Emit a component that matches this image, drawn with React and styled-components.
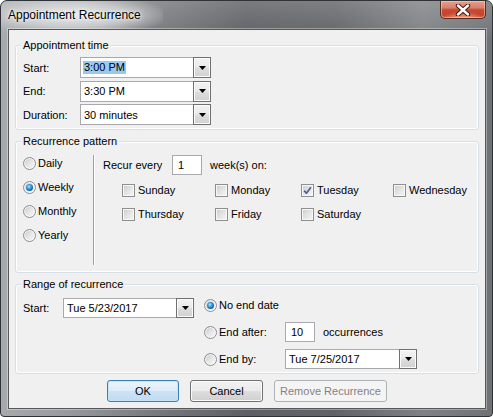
import React from "react";
import styled, { createGlobalStyle, css } from "styled-components";

const GlobalStyle = createGlobalStyle`
  html, body { margin: 0; padding: 0; background: #ffffff; }
  body { font-family: "Liberation Sans", Arial, sans-serif; font-size: 11px; color: #000; }
  * { box-sizing: border-box; }
`;

const Window = styled.div`
  width: 493px;
  height: 417px;
  display: flex;
  flex-direction: column;
  border: 1px solid #2f3236;
  border-radius: 7px 7px 4px 4px;
  overflow: hidden;
  background:
    linear-gradient(180deg, rgba(255,255,255,0.18) 0px, rgba(255,255,255,0) 40px),
    linear-gradient(90deg, #a7aaad 0%, #979a9d 14%, #76797c 32%, #5c5f63 50%, #616467 68%, #7f8285 86%, #6f7275 100%);
`;

const TitleBar = styled.div`
  height: 28px;
  flex: none;
  display: flex;
  align-items: flex-start;
`;

const Caption = styled.span`
  padding: 6px 22px 6px 7px;
  font-size: 12px;
  line-height: 16px;
  color: #000;
  background: radial-gradient(ellipse 60% 75% at 45% 50%, rgba(236,236,236,0.95) 0%, rgba(220,221,222,0.7) 55%, rgba(200,200,200,0) 100%);
  text-shadow: 0 0 6px #fff, 0 0 3px #fff;
`;

const CloseButton = styled.div`
  margin-left: auto;
  margin-right: 6px;
  width: 46px;
  height: 18px;
  border: 1px solid #5a2a22;
  border-top: none;
  border-radius: 0 0 5px 5px;
  background:
    radial-gradient(ellipse 45% 40% at 50% 100%, rgba(255,190,150,0.75), rgba(255,160,120,0) 100%),
    linear-gradient(180deg, #e6a08c 0%, #d8806a 40%, #c64a31 52%, #c3442b 80%, #cf5a3c 100%);
  box-shadow: inset 0 0 0 1px rgba(255,210,195,0.55);
  display: flex;
  align-items: center;
  justify-content: center;
`;

const Client = styled.div`
  flex: 1;
  margin: 0 6px 7px 7px;
  border: 1px solid #54575b;
  box-shadow: 0 0 0 1px rgba(255,255,255,0.35);
  background: #f0f0f0;
  display: flex;
  flex-direction: column;
  padding: 8px 6px 0 6px;
`;

const Group = styled.fieldset`
  margin: 0;
  min-width: 0;
  border: 1px solid #d5dfe5;
  border-radius: 3px;
  box-shadow: inset 0 0 0 1px #ffffff;
  padding: ${(p) => p.$pt}px 7px ${(p) => p.$pb}px 7px;
  & + & { margin-top: 4px; }
`;

const Legend = styled.legend`
  padding: 0 2px;
  margin-left: -2px;
  font-size: 11px;
  line-height: 14px;
  background: #f0f0f0;
`;

const TimeGrid = styled.div`
  display: grid;
  grid-template-columns: 57px 131px;
  grid-template-rows: 21px 21px 21px;
  row-gap: 2.5px;
`;

const Label = styled.span`
  display: flex;
  align-items: center;
  white-space: nowrap;
  ${(p) => p.$w && css`width: ${p.$w}px; flex: none;`}
`;

const ComboWrap = styled.div`
  display: flex;
  width: ${(p) => p.$w}px;
  height: ${(p) => p.$h}px;
  flex: none;
`;

const Field = styled.div`
  flex: 1;
  min-width: 0;
  border: 1px solid #a7a9ad;
  border-right: none;
  background: #ffffff;
  display: flex;
  align-items: center;
  padding-left: ${(p) => (p.$pl != null ? p.$pl : 3)}px;
  white-space: nowrap;
  overflow: hidden;
`;

const DropButton = styled.div`
  width: 18px;
  flex: none;
  border: 1px solid #707070;
  background: linear-gradient(180deg, #f3f3f3 0%, #ebebeb 45%, #dcdcdc 55%, #d2d2d2 100%);
  box-shadow: inset 0 0 0 1px #fbfbfb;
  display: flex;
  align-items: center;
  justify-content: center;
`;

const Selected = styled.span`
  background: #99c9ef;
  padding: 0 1px;
  margin-left: -1px;
  line-height: 13px;
`;

const TextBox = styled.div`
  width: ${(p) => p.$w}px;
  height: ${(p) => p.$h}px;
  flex: none;
  border: 1px solid #a7a9ad;
  background: #ffffff;
  display: flex;
  align-items: center;
  padding-left: 5px;
`;

const PatternBody = styled.div`
  display: flex;
  align-items: flex-start;
`;

const FrequencyList = styled.div`
  width: 70px;
  flex: none;
  display: grid;
  grid-auto-rows: 24px;
`;

const Choice = styled.label`
  display: flex;
  align-items: center;
  gap: 2px;
  white-space: nowrap;
`;

const RadioCircle = styled.span`
  position: relative;
  width: 13px;
  height: 13px;
  flex: none;
  border-radius: 50%;
  border: 1px solid #8d8f91;
  background: linear-gradient(135deg, #c3c4c6 0%, #e2e3e4 45%, #fbfbfb 100%);
  box-shadow: inset 0 0 0 1px rgba(255,255,255,0.7);
  ${(p) =>
    p.$checked &&
    css`
      &::after {
        content: "";
        position: absolute;
        left: 2px;
        top: 2px;
        width: 7px;
        height: 7px;
        border-radius: 50%;
        background: radial-gradient(circle at 42% 38%, #bfeaff 0%, #43a7e6 30%, #1569aa 65%, #0c3f6e 100%);
      }
    `}
`;

const WeeklyPanel = styled.div`
  margin-top: 4px;
  height: 110px;
  flex: 1;
  border-left: 1px solid #a0a0a0;
  box-shadow: inset 1px 0 0 #ffffff;
  padding-left: 9px;
`;

const RecurRow = styled.div`
  display: flex;
  align-items: center;
  height: 20px;
`;

const Suffix = styled.span`
  margin-left: 8px;
  white-space: nowrap;
`;

const DayGrid = styled.div`
  margin: 3px 0 0 19px;
  display: grid;
  grid-template-columns: 93px 86px 92px auto;
  grid-auto-rows: 24px;
`;

const DayChoice = styled.label`
  display: flex;
  align-items: center;
  gap: 3px;
  white-space: nowrap;
`;

const CheckBox = styled.span`
  width: 13px;
  height: 13px;
  flex: none;
  border: 1px solid #8e8f8f;
  background: linear-gradient(135deg, #c9cacb 0%, #e4e4e5 50%, #f7f7f7 100%);
  box-shadow: inset 0 0 0 1px #f7f7f7;
  display: flex;
  align-items: center;
  justify-content: center;
`;

const RangeBody = styled.div`
  display: flex;
  align-items: flex-start;
`;

const StartCol = styled.div`
  display: flex;
  align-items: center;
  margin-top: 3px;
`;

const EndGrid = styled.div`
  margin-left: 10px;
  display: grid;
  grid-template-columns: 81px auto;
  grid-auto-rows: 20px;
  row-gap: 7px;
`;

const Inline = styled.div`
  display: flex;
  align-items: center;
`;

const ButtonRow = styled.div`
  margin-top: 6px;
  display: flex;
  justify-content: center;
  gap: 11px;
`;

const Button = styled.button`
  width: ${(p) => p.$w}px;
  height: 22px;
  padding: 0;
  font-family: "Liberation Sans", Arial, sans-serif;
  font-size: 11px;
  color: #000;
  border: 1px solid #707070;
  border-radius: 3px;
  background: linear-gradient(180deg, #f2f2f2 0%, #ebebeb 48%, #dddddd 52%, #cfcfcf 100%);
  box-shadow: inset 0 0 0 1px #fcfcfc;
  ${(p) =>
    p.$default &&
    css`
      border-color: #3c7fb1;
      background: linear-gradient(180deg, #eaf4fc 0%, #dfedf9 48%, #cde3f5 52%, #c0dbf1 100%);
      box-shadow: inset 0 0 0 1px #c4e5f8;
    `}
  &:disabled {
    border-color: #adb2b5;
    background: #f4f4f4;
    box-shadow: none;
    color: #838383;
  }
`;

const Arrow = () => (
  <svg width="7" height="4" viewBox="0 0 7 4">
    <path d="M0 0 H7 L3.5 4 Z" fill="#000" />
  </svg>
);

const ComboBox = ({ w, h, children }) => (
  <ComboWrap $w={w} $h={h}>
    <Field>{children}</Field>
    <DropButton>
      <Arrow />
    </DropButton>
  </ComboWrap>
);

const Radio = ({ checked, children }) => (
  <Choice>
    <RadioCircle $checked={checked} />
    {children}
  </Choice>
);

const Day = ({ checked, children }) => (
  <DayChoice>
    <CheckBox>
      {checked && (
        <svg width="9" height="9" viewBox="0 0 9 9">
          <path d="M1.2 4.6 L3.4 7.2 L7.9 1.2" fill="none" stroke="#4a5d98" strokeWidth="1.7" strokeLinejoin="round" />
        </svg>
      )}
    </CheckBox>
    {children}
  </DayChoice>
);

const days = [
  ["Sunday", false],
  ["Monday", false],
  ["Tuesday", true],
  ["Wednesday", false],
  ["Thursday", false],
  ["Friday", false],
  ["Saturday", false],
];

export default function App() {
  return (
    <>
      <GlobalStyle />
      <Window>
        <TitleBar>
          <Caption>Appointment Recurrence</Caption>
          <CloseButton>
            <svg width="16" height="12" viewBox="0 0 16 12">
              <path d="M3 1.5 L13 10.5 M13 1.5 L3 10.5" stroke="#3b1810" strokeWidth="4.4" strokeLinecap="round" />
              <path d="M3 1.5 L13 10.5 M13 1.5 L3 10.5" stroke="#ffffff" strokeWidth="2.4" strokeLinecap="round" />
            </svg>
          </CloseButton>
        </TitleBar>
        <Client>
          <Group $pt={5} $pb={4}>
            <Legend>Appointment time</Legend>
            <TimeGrid>
              <Label>Start:</Label>
              <ComboBox w={131} h={21}>
                <Selected>3:00 PM</Selected>
              </ComboBox>
              <Label>End:</Label>
              <ComboBox w={131} h={21}>3:30 PM</ComboBox>
              <Label>Duration:</Label>
              <ComboBox w={131} h={21}>30 minutes</ComboBox>
            </TimeGrid>
          </Group>

          <Group $pt={3} $pb={7}>
            <Legend>Recurrence pattern</Legend>
            <PatternBody>
              <FrequencyList>
                <Radio>Daily</Radio>
                <Radio checked>Weekly</Radio>
                <Radio>Monthly</Radio>
                <Radio>Yearly</Radio>
              </FrequencyList>
              <WeeklyPanel>
                <RecurRow>
                  <Label $w={69}>Recur every</Label>
                  <TextBox $w={30} $h={20}>1</TextBox>
                  <Suffix>week(s) on:</Suffix>
                </RecurRow>
                <DayGrid>
                  {days.map(([name, checked]) => (
                    <Day key={name} checked={checked}>
                      {name}
                    </Day>
                  ))}
                </DayGrid>
              </WeeklyPanel>
            </PatternBody>
          </Group>

          <Group $pt={4} $pb={4}>
            <Legend>Range of recurrence</Legend>
            <RangeBody>
              <StartCol>
                <Label $w={40}>Start:</Label>
                <ComboBox w={131} h={20}>Tue 5/23/2017</ComboBox>
              </StartCol>
              <EndGrid>
                <Radio checked>No end date</Radio>
                <span />
                <Radio>End after:</Radio>
                <Inline>
                  <TextBox $w={30} $h={20}>10</TextBox>
                  <Suffix>occurrences</Suffix>
                </Inline>
                <Radio>End by:</Radio>
                <ComboBox w={132} h={20}>Tue 7/25/2017</ComboBox>
              </EndGrid>
            </RangeBody>
          </Group>

          <ButtonRow>
            <Button $w={72} $default>OK</Button>
            <Button $w={73}>Cancel</Button>
            <Button $w={113} disabled>Remove Recurrence</Button>
          </ButtonRow>
        </Client>
      </Window>
    </>
  );
}
